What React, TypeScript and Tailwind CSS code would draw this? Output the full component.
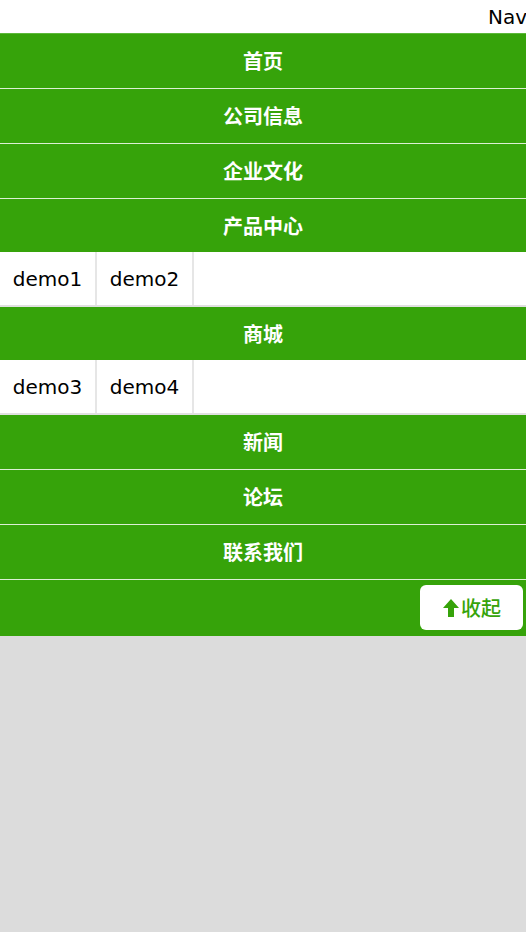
import React from "react";

const GREEN = "bg-[#36a30a]";

function Item({ label, border = true }: { label: string; border?: boolean }) {
  return (
    <div
      className={`${GREEN} flex items-center justify-center text-white font-bold text-[20px] ${
        border ? "h-[55px] border-b border-[#dcefd4]" : "h-[53px]"
      }`}
      style={{ fontFamily: '"Noto Sans CJK SC", sans-serif' }}
    >
      {label}
    </div>
  );
}

function Sub({ items }: { items: string[] }) {
  return (
    <div className="h-[55px] bg-white border-b-2 border-[#e0e0e0] flex">
      {items.map((t) => (
        <div
          key={t}
          className="w-[97px] h-full border-r-2 border-[#e6e6e6] flex items-center justify-center text-[20px] text-black"
          style={{ fontFamily: '"DejaVu Sans", sans-serif' }}
        >
          {t}
        </div>
      ))}
    </div>
  );
}

export default function App() {
  return (
    <div className="min-h-screen w-full bg-[#dcdcdc]">
      <div
        className="h-[33px] bg-white overflow-hidden whitespace-nowrap pl-[488px] flex items-center text-[20px] text-black"
        style={{ fontFamily: '"DejaVu Sans", sans-serif' }}
      >
        Navigation
      </div>
      <div className="border-t border-[#5cb83a]">
        <Item label="首页" />
      </div>
      <Item label="公司信息" />
      <Item label="企业文化" />
      <Item label="产品中心" border={false} />
      <Sub items={["demo1", "demo2"]} />
      <Item label="商城" border={false} />
      <Sub items={["demo3", "demo4"]} />
      <Item label="新闻" />
      <Item label="论坛" />
      <Item label="联系我们" />
      <div className={`${GREEN} h-[56px] flex justify-end items-start pt-[5px] pr-[3px]`}>
        <button
          className="w-[103px] h-[45px] bg-white rounded-[6px] flex items-center justify-center text-[#36a30a] text-[20px] font-medium"
          style={{ fontFamily: '"Noto Sans CJK SC", sans-serif' }}
        >
          <svg width="18" height="20" viewBox="0 0 18 20" className="mr-[1px]">
            <path d="M9 1 L17 10 L12 10 L12 19 L6 19 L6 10 L1 10 Z" fill="#36a30a" />
          </svg>
          收起
        </button>
      </div>
    </div>
  );
}
